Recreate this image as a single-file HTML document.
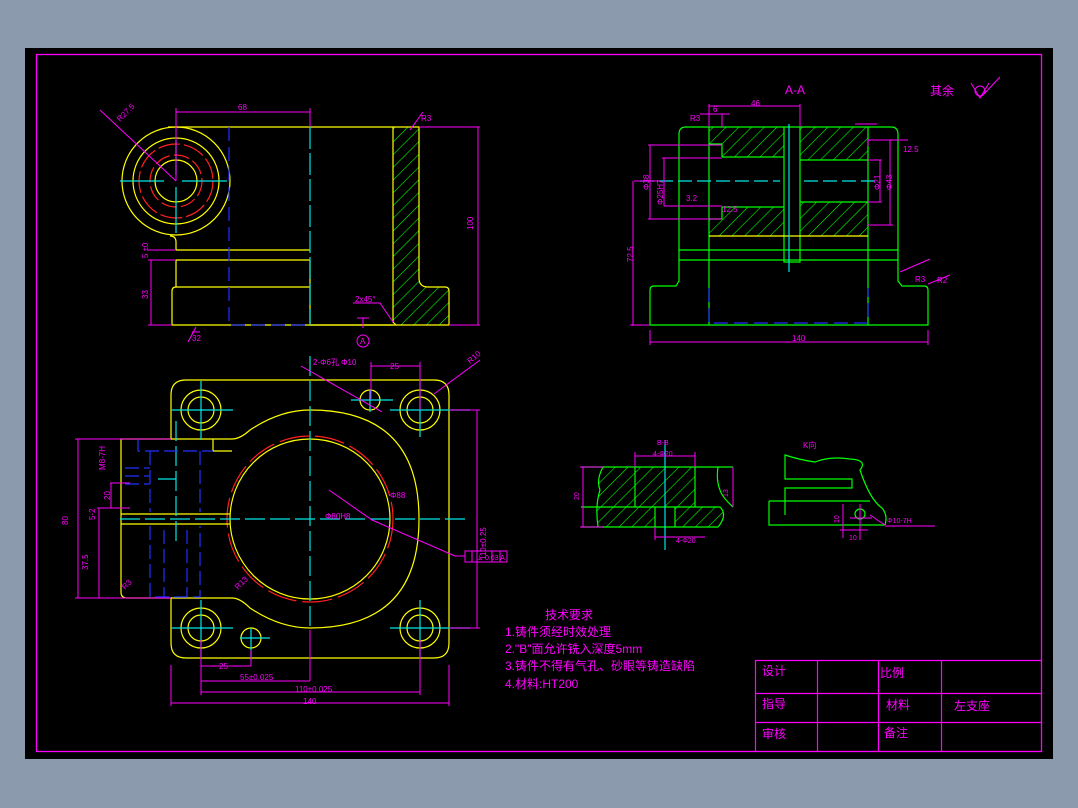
<!DOCTYPE html>
<html><head><meta charset="utf-8"><style>
html,body{margin:0;padding:0;background:#8c9aad;width:1078px;height:808px;overflow:hidden}
svg{position:absolute;left:0;top:0}
text{font-family:"Liberation Sans","Noto Sans CJK SC",sans-serif;fill:#ff00ff}
</style></head><body>
<svg width="1078" height="808" viewBox="0 0 1078 808" xmlns="http://www.w3.org/2000/svg">
<defs>
<pattern id="h" width="9" height="9" patternUnits="userSpaceOnUse" patternTransform="rotate(45)">
<line x1="0" y1="0" x2="0" y2="9" stroke="#00ff00" stroke-width="1.2"/></pattern>
</defs>
<rect x="25" y="48" width="1028" height="711" fill="#000"/>
<rect x="36.5" y="54.5" width="1005" height="697" fill="none" stroke="#ff00ff" stroke-width="1.3"/>

<!-- ========== Front view (top-left) ========== -->
<g fill="none" stroke-width="1.2">
<path d="M393 127 H419 V278 Q419 287 428 287 H445 Q449 287 449 291 V325 H396 L393 322 Z" fill="url(#h)" stroke="none"/>
<path d="M168 127 H419 V278 Q419 287 428 287 H445 Q449 287 449 291 V325 H172 V291 Q172 287 176 287 H310" stroke="#ffff00"/>
<path d="M393 127 V322 L396 325" stroke="#ffff00"/>
<path d="M176 250 H310 M176 260 H310 M176 287 V260 M176 250 V242 Q176 236 170 236 M310 260 V325 M310 325 H393" stroke="#ffff00"/>
<circle cx="176" cy="181" r="54" stroke="#ffff00"/>
<circle cx="176" cy="181" r="43" stroke="#ffff00"/>
<circle cx="176" cy="181" r="21" stroke="#ffff00"/>
<circle cx="176" cy="181" r="37" stroke="#ff2020" stroke-dasharray="22 4"/>
<circle cx="176" cy="181" r="26" stroke="#ff2020" stroke-dasharray="16 4"/>
<path d="M120 181 H164 M182 181 H227 M176 140 V175 M176 187 V233" stroke="#00e5e5"/>
<path d="M229 127 V325 H310" stroke="#2030ff" stroke-dasharray="14 6"/>
<path d="M310 127 V325" stroke="#00e5e5" stroke-dasharray="22 4"/>
<g stroke="#ff00ff" stroke-width="1">
<path d="M176 112 H310 M176 108 V181 M310 108 V127 M420 127 H480 M478 127 V325 M449 325 H480 M151 260 V325 M148 325 H172 M148 260 H176 M148 250 H176 M100 110 L176 181 M423 112 L410 130"/>
<path d="M353 303 H380 L393 322 M363 318 V328 M357 318 H369"/>
<circle cx="363" cy="341" r="6"/>
<path d="M196 327 L188 342 M192 332 L200 332"/>
</g>
</g>
<g font-size="8">
<text x="238" y="110">68</text>
<text x="120" y="122" transform="rotate(-45 120 122)">R27.5</text>
<text x="421" y="121">R3</text>
<text x="473" y="230" transform="rotate(-90 473 230)">100</text>
<text x="148" y="299" transform="rotate(-90 148 299)">33</text>
<text x="148" y="258" transform="rotate(-90 148 258)">5 ±0</text>
<text x="355" y="302">2x45°</text>
<text x="192" y="341">32</text>
<text x="360" y="344" font-size="8">A</text>
</g>

<!-- ========== A-A section (top-right) ========== -->
<g fill="none" stroke-width="1.2">
<path d="M709 127 H868 V236 H709 Z" fill="url(#h)" stroke="none"/>
<rect x="722" y="157" width="62" height="50" fill="#000"/>
<rect x="709" y="144" width="13" height="75" fill="#000"/>
<rect x="800" y="160" width="68" height="42" fill="#000"/>
<rect x="784" y="127" width="16" height="135" fill="#000"/>
<path d="M686 127 H891 Q898 127 898 134 V281 L902 286 H924 Q928 286 928 290 V325 H650 V290 Q650 286 654 286 H676 L679 281 V134 Q679 127 686 127 Z" stroke="#00ff00"/>
<path d="M709 127 V325 M868 127 V325 M709 144 H722 V157 M709 219 H722 V207 M722 157 H784 M722 207 H784 M784 127 V262 H800 V127 M800 160 H868 M800 202 H868 M679 250 H898 M679 260 H898" stroke="#00ff00"/>
<path d="M709 236 H868" stroke="#ffff00"/>
<path d="M789 124 V272" stroke="#00e5e5"/>
<path d="M640 181 H780 M804 181 H880" stroke="#00e5e5" stroke-dasharray="14 5"/>
<path d="M709 288 V323 H868 V288" stroke="#2030ff" stroke-dasharray="14 6"/>
<g stroke="#ff00ff" stroke-width="1">
<path d="M709 106 H800 M709 104 V127 M800 104 V127 M700 114 H730 M722 114 V127 M648 145 H722 M650 145 V219 M648 219 H722 M662 158 H722 M664 158 V206 M664 206 H722 M634 181 H660 M633 181 V326 M630 325 H650 M650 330 V345 M928 330 V345 M650 342 H928 M868 139 V146 M855 124 H877 M868 140 H908 M868 225 H893 M890 140 V225 M868 160 H882 M880 160 V202 M868 202 H882 M900 272 L930 259 M928 284 L950 275"/>
<path d="M971 83 L980 98 L989 83 M984 94 L1000 77"/>
<circle cx="980" cy="91" r="5"/>
</g>
</g>
<g font-size="8">
<text x="785" y="94" font-size="12">A-A</text>
<text x="930" y="95" font-size="12">其余</text>
<text x="751" y="106">46</text>
<text x="690" y="121">R3</text>
<text x="713" y="112">6</text>
<text x="903" y="152">12.5</text>
<text x="915" y="282">R3</text>
<text x="937" y="283">R2</text>
<text x="792" y="341">140</text>
<text x="633" y="262" transform="rotate(-90 633 262)">72.5</text>
<text x="649" y="190" transform="rotate(-90 649 190)">Φ38</text>
<text x="663" y="205" transform="rotate(-90 663 205)">Φ25H7</text>
<text x="880" y="190" transform="rotate(-90 880 190)">Φ21</text>
<text x="892" y="190" transform="rotate(-90 892 190)">Φ43</text>
<text x="686" y="201">3.2</text>
<text x="722" y="212">12.5</text>
</g>

<!-- ========== Top view (bottom-left) ========== -->
<g fill="none" stroke-width="1.2">
<path d="M186 380 H434 Q449 380 449 395 V643 Q449 658 434 658 H186 Q171 658 171 643 V598 H127 Q121 598 121 592 V439 H171 V395 Q171 380 186 380 Z" stroke="#ffff00"/>
<path d="M171 439 H232 Q240 439 250 430 Q280 410 310 410 Q419 410 419 519 Q419 628 310 628 Q280 628 250 608 Q240 598 232 598 H171" stroke="#ffff00"/>
<circle cx="310" cy="519" r="80" stroke="#ffff00"/>
<circle cx="310" cy="519" r="83" stroke="#ff2020" stroke-dasharray="30 6"/>
<path d="M121 514 H230 M121 524 H230 M213 439 V451 M213 451 H232" stroke="#ffff00"/>
<g stroke="#ffff00">
<circle cx="201" cy="410" r="20"/><circle cx="201" cy="410" r="13"/>
<circle cx="420" cy="410" r="20"/><circle cx="420" cy="410" r="13"/>
<circle cx="201" cy="628" r="20"/><circle cx="201" cy="628" r="13"/>
<circle cx="420" cy="628" r="20"/><circle cx="420" cy="628" r="13"/>
<circle cx="370" cy="400" r="10"/><circle cx="251" cy="638" r="10"/>
</g>
<g stroke="#00e5e5">
<path d="M171 410 H233 M201 381 V440 M390 410 H470 M420 380 V437 M171 628 H233 M201 600 V658 M390 628 H470 M420 600 V658 M351 400 H393 M370 390 V412 M240 638 H270 M251 628 V660 M176 479 H158 M176 479 H158"/>
<path d="M310 356 V630 M120 519 H470" stroke-dasharray="20 5"/>
<path d="M176 421 V545" stroke-dasharray="20 5"/>
</g>
<g stroke="#2030ff">
<path d="M138 439 V451 H213 M150 451 V512 M200 451 V512 M150 526 V597 H200 V526 M164 530 V597 M187 530 V597 M125 468 H150 M125 476 H150 M125 484 H150" stroke-dasharray="14 5"/>
</g>
<g stroke="#ff00ff" stroke-width="1">
<path d="M75 439 H171 M75 598 H171 M78 439 V598 M97 508 H130 M99 508 V598 M110 483 H130 M111 483 V508 M171 665 V706 M449 665 V706 M171 703 H449 M201 640 V695 M420 640 V695 M201 692 H420 M201 681 H310 M310 630 V681 M201 666 H251 M251 650 V666 M371 366 H420 M371 362 V400 M420 362 V410 M449 410 H480 M449 628 H480 M477 410 V628 M434 394 L480 360 M329 490 L372 520 L455 556 H465 M301 366 L382 412"/>
<rect x="465" y="551" width="42" height="11"/>
<path d="M472 551 V562 M492 551 V562 M500 551 V562"/>
</g>
</g>
<g font-size="8">
<text x="68" y="525" transform="rotate(-90 68 525)">80</text>
<text x="88" y="570" transform="rotate(-90 88 570)">37.5</text>
<text x="110" y="500" transform="rotate(-90 110 500)">20</text>
<text x="105" y="470" transform="rotate(-90 105 470)">M8-7H</text>
<text x="95" y="520" transform="rotate(-90 95 520)">5-2</text>
<text x="219" y="669">25</text>
<text x="240" y="680">55±0.025</text>
<text x="295" y="692">110±0.025</text>
<text x="303" y="704">140</text>
<text x="390" y="369">25</text>
<text x="470" y="364" transform="rotate(-40 470 364)">R10</text>
<text x="486" y="560" transform="rotate(-90 486 560)">110±0.25</text>
<text x="325" y="519">Φ80H8</text>
<text x="390" y="498">Φ88</text>
<text x="313" y="365">2-Φ6孔 Φ10</text>
<text x="476" y="560" font-size="7">⊥ 0.03 A</text>
<text x="125" y="590" transform="rotate(-45 125 590)">R3</text>
<text x="238" y="590" transform="rotate(-45 238 590)">R13</text>
</g>

<!-- ========== B-B ========== -->
<g fill="none" stroke-width="1.2">
<path d="M603 467 H635 V507 H733 Q722 497 720 490 Q716 480 718 467 Z M695 467 H718 Q716 480 720 490 Q722 497 733 507 H695 Z" fill="url(#h)" stroke="none"/>
<path d="M603 467 Q596 480 600 490 Q595 505 598 527 H655 V507 H635 V467 Z" fill="url(#h)" stroke="none"/>
<path d="M675 507 H720 Q728 515 718 527 H675 Z" fill="url(#h)" stroke="none"/>
<path d="M581 467 H733 M581 527 H718 Q728 515 720 507 H581 M635 467 V507 M695 467 V507 M655 507 V527 M675 507 V527 M603 467 Q596 480 600 490 Q595 505 598 527 M718 467 Q716 480 720 490 Q722 497 733 507" stroke="#00ff00"/>
<path d="M665 440 V550" stroke="#00e5e5"/>
<g stroke="#ff00ff" stroke-width="1">
<path d="M635 456 H695 M635 452 V467 M695 452 V467 M583 467 V527 M580 467 H603 M580 527 H603 M733 467 V507 M655 527 V540 M655 537 H705"/>
</g>
<path d="M785 515 V488 H852 V479 H785 V455 Q800 460 815 462 Q830 456 850 459 Q868 460 860 470 Q870 500 882 508 Q888 515 885 525 M769 501 H870 M769 501 V525 H885" stroke="#00ff00"/>
<circle cx="860" cy="514" r="5" stroke="#00ff00"/>
<g stroke="#ff00ff" stroke-width="1">
<path d="M843 504 V538 M850 518 H872 M840 530 H868 M860 504 V540 M885 525 L870 515 M885 526 H935"/>
</g>
</g>
<g font-size="7">
<text x="657" y="445">B-B</text>
<text x="653" y="456">4-Φ20</text>
<text x="676" y="543">4-Φ20</text>
<text x="579" y="500" transform="rotate(-90 579 500)">20</text>
<text x="728" y="497" transform="rotate(-90 728 497)">13</text>
<text x="803" y="448" font-size="8">K向</text>
<text x="839" y="523" transform="rotate(-90 839 523)">10</text>
<text x="849" y="540">10</text>
<text x="887" y="523">Φ10-7H</text>
</g>

<!-- ========== Tech notes ========== -->
<g font-size="12">
<text x="545" y="619">技术要求</text>
<text x="505" y="636">1.铸件须经时效处理</text>
<text x="505" y="653">2."B"面允许铣入深度5mm</text>
<text x="505" y="670">3.铸件不得有气孔、砂眼等铸造缺陷</text>
<text x="505" y="688">4.材料:HT200</text>
</g>

<!-- ========== Title block ========== -->
<g stroke="#ff00ff" stroke-width="1.2" fill="none">
<path d="M755.5 660.5 H1041.5 M755.5 693.5 H1041.5 M755.5 722.5 H1041.5 M755.5 660 V752 M817.5 660 V752 M878.5 660 V752 M941.5 660 V752"/>
</g>
<g font-size="12">
<text x="762" y="675">设计</text>
<text x="880" y="677">比例</text>
<text x="762" y="708">指导</text>
<text x="886" y="709">材料</text>
<text x="954" y="710">左支座</text>
<text x="762" y="738">审核</text>
<text x="884" y="737">备注</text>
</g>
</svg>
</body></html>
